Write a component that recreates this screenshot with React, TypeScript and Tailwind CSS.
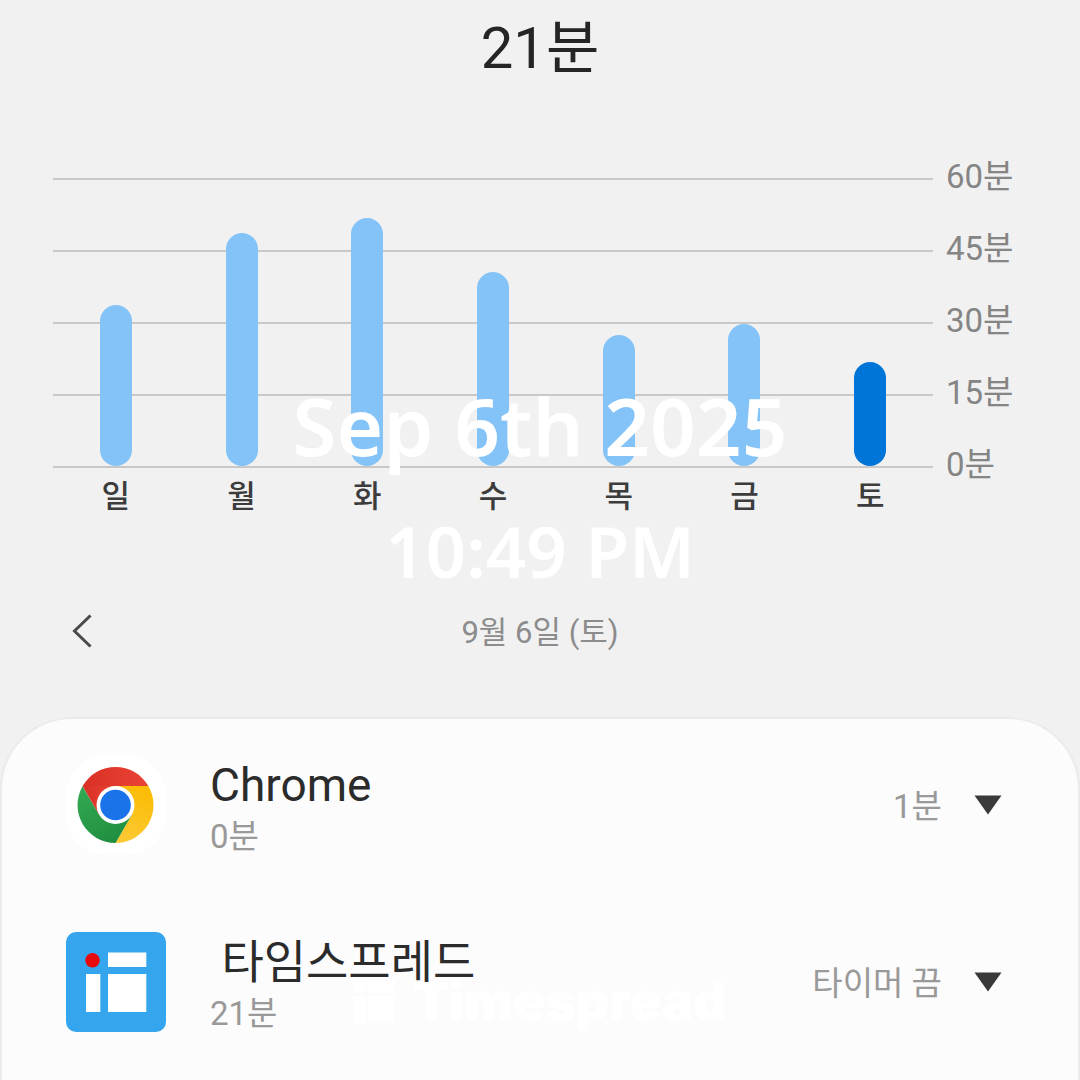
const week = [
  { day: '일', minutes: 33.5 },
  { day: '월', minutes: 48.5 },
  { day: '화', minutes: 51.7 },
  { day: '수', minutes: 40.4 },
  { day: '목', minutes: 27.3 },
  { day: '금', minutes: 29.6 },
  { day: '토', minutes: 21.7, today: true }
];

const ticks = [60, 45, 30, 15, 0];

const apps = [
  { name: 'Chrome', used: '0분', timer: '1분', Icon: ChromeIcon },
  { name: ' 타임스프레드', used: '21분', timer: '타이머 끔', Icon: TimespreadIcon }
];

function ChromeIcon() {
  return (
    <svg viewBox="0 0 100 100" className="w-[100px] h-[100px] shrink-0" aria-hidden="true">
      <defs>
        <linearGradient id="red" x1="0" y1="0" x2="1" y2="0">
          <stop offset="0" stopColor="#d93025" />
          <stop offset="1" stopColor="#ea4335" />
        </linearGradient>
        <linearGradient id="green" x1="0.7" y1="1" x2="0.2" y2="0">
          <stop offset="0" stopColor="#1e8e3e" />
          <stop offset="1" stopColor="#34a853" />
        </linearGradient>
        <linearGradient id="yellow" x1="0.3" y1="1" x2="0.6" y2="0">
          <stop offset="0" stopColor="#fcc934" />
          <stop offset="1" stopColor="#fbbc04" />
        </linearGradient>
      </defs>
      <rect width="100" height="100" rx="40" fill="#fff" />
      <path d="M49.5 50 L16.6 31 A38 38 0 0 1 82.4 31 Z" fill="url(#red)" />
      <path d="M49.5 31 H82.4 A38 38 0 0 1 49.5 88 L66 59.5 Z" fill="url(#yellow)" />
      <path d="M16.6 31 A38 38 0 0 0 49.5 88 L66 59.5 L33 59.5 Z" fill="url(#green)" />
      <path d="M16.6 31 L33 59.5 L49.5 50 V31 Z" fill="url(#red)" />
      <circle cx="49.5" cy="50" r="19" fill="#fff" />
      <circle cx="49.5" cy="50" r="15.3" fill="#1a73e8" />
    </svg>
  );
}

function TimespreadIcon() {
  return (
    <svg viewBox="0 0 100 100" className="w-[100px] h-[100px] shrink-0" aria-hidden="true">
      <rect width="100" height="100" rx="10" fill="#35a6ee" />
      <circle cx="26.5" cy="28.3" r="7.2" fill="#e60a0a" />
      <rect x="42" y="20.5" width="38.3" height="14.5" fill="#fff" />
      <rect x="20" y="42" width="14.3" height="38" fill="#fff" />
      <rect x="42" y="42" width="38.3" height="38" fill="#fff" />
    </svg>
  );
}

function UsageChart() {
  return (
    <section className="flex gap-[13px] pl-[53px] mt-[94px]">
      <div className="flex-1">
        <div className="relative h-[290px]">
          <div className="absolute inset-0 flex flex-col justify-between">
            {ticks.map((tick) => (
              <div key={tick} className="h-[2px] bg-[#c8c8c8]" />
            ))}
          </div>
          <div className="relative h-[288px] grid grid-cols-7 items-end justify-items-center">
            {week.map((item) => (
              <div
                key={item.day}
                className={`w-8 rounded-full ${item.today ? 'bg-[#0075d8]' : 'bg-[#83c3f8]'}`}
                style={{ height: `${(item.minutes / 60) * 100}%` }}
              />
            ))}
          </div>
        </div>
        <div className="grid grid-cols-7 mt-[13px] text-center text-[31px] leading-8 font-medium text-[#3c3c3c]">
          {week.map((item) => (
            <span key={item.day}>{item.day}</span>
          ))}
        </div>
      </div>
      <div className="w-[134px] h-[326px] -mt-5 flex flex-col justify-between text-[33px] leading-[38px] text-[#858585]">
        {ticks.map((tick) => (
          <span key={tick}>{tick}분</span>
        ))}
      </div>
    </section>
  );
}

function Watermark() {
  return (
    <div className="absolute inset-0 pointer-events-none text-white">
      <div className="absolute inset-x-0 top-[385px] flex flex-col gap-[50px] text-center font-semibold font-['Noto_Sans','Noto_Sans_CJK_KR',sans-serif]">
        <p className="text-[80px] leading-[80px]">Sep 6th 2025</p>
        <p className="text-[71px] leading-[71px]">10:49 PM</p>
      </div>
      <div className="absolute inset-x-0 top-[972px] flex items-center justify-center gap-[18px]">
        <svg viewBox="0 0 42 42" className="w-[42px] h-[42px]" fill="#fff" aria-hidden="true">
          <circle cx="6" cy="6" r="6" />
          <rect x="15" y="0" width="27" height="12" />
          <rect x="0" y="15" width="12" height="27" />
          <rect x="15" y="15" width="27" height="27" />
        </svg>
        <span className="text-[52px] leading-[60px] font-black font-['Inter',sans-serif]">
          Timespread
        </span>
      </div>
    </div>
  );
}

export default function App() {
  return (
    <main
      lang="ko"
      className="relative min-h-screen flex flex-col overflow-hidden bg-[#f1f1f1] font-['Roboto','Noto_Sans_CJK_KR',sans-serif]"
    >
      <h1 className="pt-3 text-center text-[58px] leading-[72px] text-[#252525]">21분</h1>

      <UsageChart />

      <nav className="mt-[94px] px-[62px] grid grid-cols-[40px_1fr_40px] items-center">
        <button type="button" aria-label="이전 날짜" className="h-12 flex items-center justify-center">
          <svg viewBox="0 0 20 34" className="w-5 h-[34px]" fill="none" stroke="#4a4a4a" strokeWidth="3">
            <path d="M18.5 1.5 L2.5 17 L18.5 32.5" />
          </svg>
        </button>
        <span className="pt-1 text-center text-[31px] leading-10 text-[#8c8c8c]">9월 6일 (토)</span>
      </nav>

      <section className="mt-[62px] flex-1 rounded-t-[72px] border-2 border-b-0 border-[#ebebeb] bg-[#fcfcfc] pt-[30px] pb-9 pl-16 pr-[76px]">
        <ul className="flex flex-col gap-[65px]">
          {apps.map(({ name, used, timer, Icon }) => (
            <li key={name} className="flex items-center">
              <Icon />
              <div className="flex-1 pl-[44px] pt-2">
                <h2 className="text-[46px] leading-[56px] whitespace-pre text-[#2b2b2b]">{name}</h2>
                <p className="text-[33px] leading-[48px] text-[#999]">{used}</p>
              </div>
              <button type="button" className="flex items-center gap-8 text-[33px] leading-[44px] text-[#999]">
                <span className="pt-1">{timer}</span>
                <svg viewBox="0 0 28 20" className="w-7 h-5" fill="#3a3a3a" aria-hidden="true">
                  <path d="M0.5 0.5 H27.5 L14 19.5 Z" />
                </svg>
              </button>
            </li>
          ))}
        </ul>
      </section>

      <Watermark />
    </main>
  );
}
